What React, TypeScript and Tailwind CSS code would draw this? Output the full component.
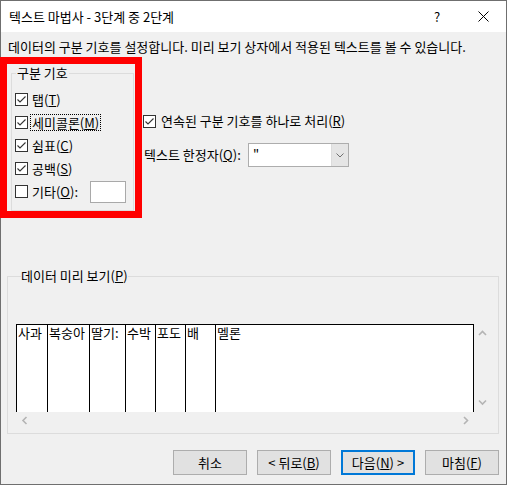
import React from "react"

const cols = [
  { text: "사과", w: "w-[30px]" },
  { text: "복숭아", w: "w-[42px]" },
  { text: "딸기:", w: "w-[36px]" },
  { text: "수박", w: "w-[30px]" },
  { text: "포도", w: "w-[30px]" },
  { text: "배", w: "w-[30px]" },
  { text: "멜론", w: "flex-1" },
]

function Mn({ text, k, colon }: { text: string; k: string; colon?: boolean }) {
  return (
    <>
      {text}(<span className="underline">{k}</span>){colon ? ":" : ""}
    </>
  )
}

function Check({ checked }: { checked: boolean }) {
  return (
    <span className="flex h-[13px] w-[13px] shrink-0 items-center justify-center border border-[#333333] bg-white">
      {checked && (
        <svg width="11" height="11" viewBox="0 0 11 11">
          <path d="M1.5 5.5 L4 8 L9.5 2.5" stroke="#333333" strokeWidth="1.1" fill="none" />
        </svg>
      )}
    </span>
  )
}

function CheckRow({ checked, focus, children }: { checked: boolean; focus?: boolean; children: React.ReactNode }) {
  return (
    <div className="flex h-[23px] items-center">
      <Check checked={checked} />
      <span
        className={`ml-[2px] border px-[1px] leading-[15px] ${focus ? "border-dotted border-black" : "border-transparent"}`}
      >
        {children}
      </span>
    </div>
  )
}

function Chevron({ dir }: { dir: "up" | "down" | "left" | "right" }) {
  const d = {
    up: "M1 5 L4.5 1.5 L8 5",
    down: "M1 1.5 L4.5 5 L8 1.5",
    left: "M5.5 1 L2 4.5 L5.5 8",
    right: "M2 1 L5.5 4.5 L2 8",
  }[dir]
  const vertical = dir === "up" || dir === "down"
  return (
    <svg width={vertical ? 9 : 7} height={vertical ? 7 : 9} viewBox={vertical ? "0 0 9 7" : "0 0 7 9"}>
      <path d={d} stroke="#b4b4b4" strokeWidth="1.6" fill="none" />
    </svg>
  )
}

export default function App() {
  return (
    <div className="relative h-[485px] w-[507px] font-['Malgun_Gothic','Noto_Sans_CJK_KR',sans-serif] text-[13px] text-black">
      <div className="flex h-full w-full flex-col border border-[#6f6f6f] bg-[#f0f0f0]">
        {/* title bar */}
        <div className="flex h-[31px] shrink-0 items-center bg-white pl-[8px]">
          <span className="leading-[16px]">텍스트 마법사 - 3단계 중 2단계</span>
          <div className="ml-auto flex h-full">
            <div className="flex w-[46px] items-center justify-center">?</div>
            <div className="flex w-[46px] items-center justify-center">
              <svg width="11" height="11" viewBox="0 0 11 11">
                <path d="M0.5 0.5 L10.5 10.5 M10.5 0.5 L0.5 10.5" stroke="#000" strokeWidth="1" />
              </svg>
            </div>
          </div>
        </div>

        {/* body */}
        <div className="flex flex-1 flex-col">
          <p className="ml-[7px] mt-[7px] leading-[16px]">
            데이터의 구분 기호를 설정합니다. 미리 보기 상자에서 적용된 텍스트를 볼 수 있습니다.
          </p>

          <div className="mt-[10px] flex">
            <fieldset className="ml-[10px] h-[146px] w-[123px] border border-[#dcdcdc] pb-[6px] pl-[3px] pr-[7px]">
              <legend className="ml-[1px] px-[1px] leading-[16px]">구분 기호</legend>
              <div className="mt-[7px] flex flex-col">
                <CheckRow checked>
                  <Mn text="탭" k="T" />
                </CheckRow>
                <CheckRow checked focus>
                  <Mn text="세미콜론" k="M" />
                </CheckRow>
                <CheckRow checked>
                  <Mn text="쉼표" k="C" />
                </CheckRow>
                <CheckRow checked>
                  <Mn text="공백" k="S" />
                </CheckRow>
                <div className="flex h-[23px] items-center">
                  <CheckRow checked={false}>
                    <Mn text="기타" k="O" colon />
                  </CheckRow>
                  <div className="ml-auto h-[22px] w-[36px] border border-[#a9a9a9] bg-white" />
                </div>
              </div>
            </fieldset>

            <div className="ml-[9px] flex flex-col">
              <div className="mt-[48px] flex h-[16px] items-center">
                <Check checked />
                <span className="ml-[5px] leading-[16px]">
                  <Mn text="연속된 구분 기호를 하나로 처리" k="R" />
                </span>
              </div>
              <div className="mt-[14px] flex items-center">
                <span className="ml-[1px] w-[104px] leading-[16px]">
                  <Mn text="텍스트 한정자" k="Q" colon />
                </span>
                <div className="flex h-[24px] w-[101px] border border-[#adadad] bg-white">
                  <span className="flex-1 pl-[4px] leading-[20px]">"</span>
                  <div className="flex w-[17px] items-center justify-center border-l border-[#dcdcdc] bg-[#e5e5e5]">
                    <svg width="8" height="5" viewBox="0 0 8 5">
                      <path d="M0.5 0.5 L4 4 L7.5 0.5" stroke="#707070" strokeWidth="1" fill="none" />
                    </svg>
                  </div>
                </div>
              </div>
            </div>
          </div>

          {/* preview */}
          <fieldset className="ml-[6px] mt-[57px] w-[492px] border border-[#dcdcdc] pb-[4px] pl-[8px]">
            <legend className="ml-[5px] leading-[16px]">
              <Mn text="데이터 미리 보기" k="P" />
            </legend>
            <div className="mt-[40px] flex h-[105px] w-[475px] flex-col">
              <div className="flex h-[88px]">
                <div className="flex w-[458px] border-x border-t border-black bg-white">
                  {cols.map((c, i) => (
                    <div
                      key={c.text}
                      className={`${c.w} ${i > 0 ? "border-l border-black" : ""} whitespace-nowrap pl-[1px] leading-[16px]`}
                    >
                      {c.text}
                    </div>
                  ))}
                </div>
                <div className="flex w-[17px] flex-col items-center justify-between py-[6px]">
                  <Chevron dir="up" />
                  <Chevron dir="down" />
                </div>
              </div>
              <div className="flex h-[17px] w-[458px] items-center justify-between px-[5px]">
                <Chevron dir="left" />
                <Chevron dir="right" />
              </div>
            </div>
          </fieldset>

          {/* buttons */}
          <div className="mr-[7px] mt-[16px] flex justify-end gap-[10px]">
            <button className="h-[25px] w-[74px] border border-[#adadad] bg-[#e1e1e1]">취소</button>
            <button className="h-[25px] w-[74px] border border-[#adadad] bg-[#e1e1e1]">
              &lt; <Mn text="뒤로" k="B" />
            </button>
            <button className="h-[25px] w-[74px] border-2 border-[#0078d7] bg-[#e1e1e1]">
              <Mn text="다음" k="N" /> &gt;
            </button>
            <button className="h-[25px] w-[74px] border border-[#adadad] bg-[#e1e1e1]">
              <Mn text="마침" k="F" />
            </button>
          </div>
        </div>
      </div>

      {/* red highlight annotation */}
      <div className="pointer-events-none absolute left-0 top-[57px] h-[161px] w-[142px] border-[7px] border-[#ff0000]" />
    </div>
  )
}
